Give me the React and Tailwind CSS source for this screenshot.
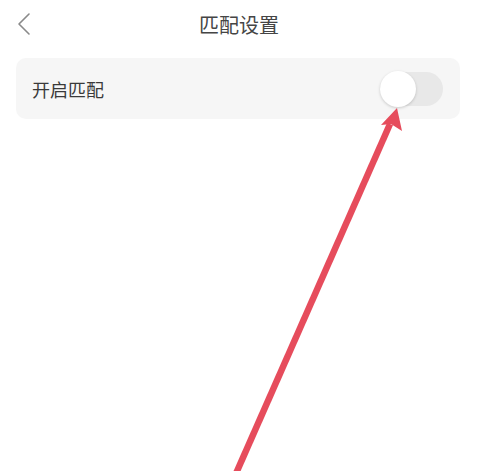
export default function App() {
  return (
    <div
      className="relative w-[478px] h-[471px] bg-white overflow-hidden"
      style={{ fontFamily: '"Noto Sans CJK SC", "Noto Sans", sans-serif' }}
    >
      {/* header */}
      <div className="relative flex items-center justify-center h-[50px]">
        <svg
          className="absolute left-[15px] top-[12px]"
          width="18"
          height="24"
          viewBox="0 0 18 24"
          fill="none"
        >
          <path d="M14 2 L4 12 L14 22" stroke="#8a8a8a" strokeWidth="1.6" strokeLinecap="round" strokeLinejoin="round" />
        </svg>
        <h1 className="text-[20px] text-[#454545] leading-none">匹配设置</h1>
      </div>

      {/* setting card */}
      <div className="ml-[16px] mr-[18px] mt-[8px] h-[61px] rounded-[10px] bg-[#f6f6f6] flex items-center justify-between pl-[16px] pr-[17px]">
        <span className="text-[18px] text-[#3a3a3a] leading-none">开启匹配</span>
        <div className="relative w-[63px] h-[34px] rounded-full bg-[#e8e8e8]">
          <div className="absolute left-0 top-[-1px] w-[36px] h-[36px] rounded-full bg-white shadow-[0_1px_3px_rgba(0,0,0,0.18)]" />
        </div>
      </div>

      {/* annotation arrow */}
      <svg className="absolute inset-0 pointer-events-none" width="478" height="471" viewBox="0 0 478 471">
        <line x1="234" y1="478" x2="390" y2="124" stroke="#e64c5c" strokeWidth="6.5" />
        <path d="M397 108 L402 131 L391 124 L381 125 Z" fill="#e64c5c" />
      </svg>
    </div>
  )
}
